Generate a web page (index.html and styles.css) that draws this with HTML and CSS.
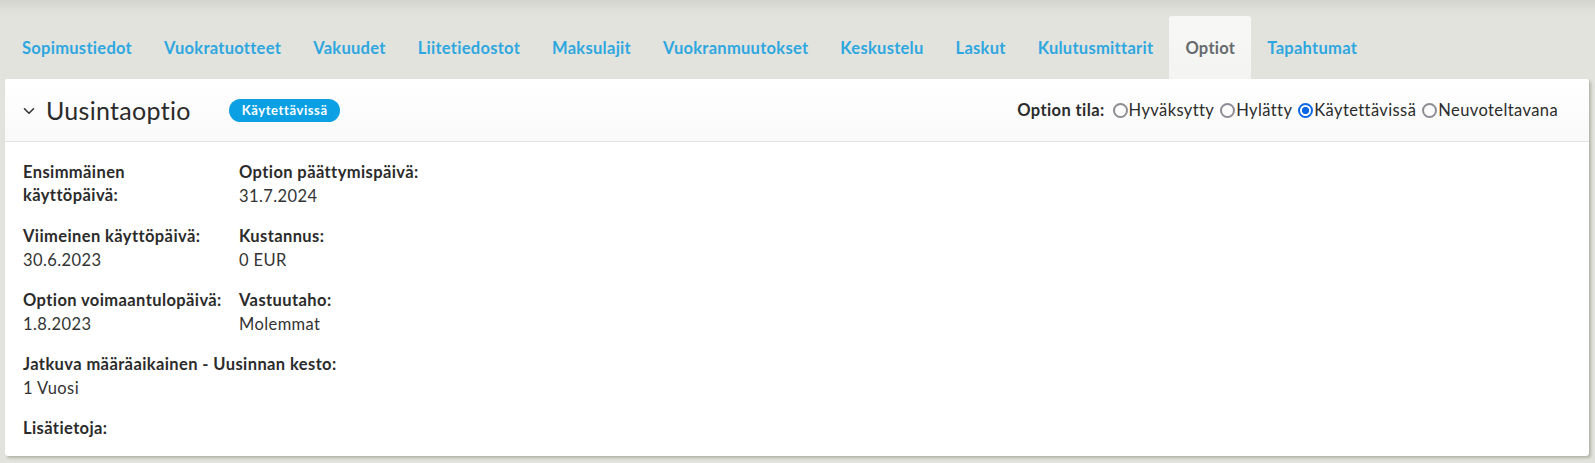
FILE: index.html
```html
<!DOCTYPE html>
<html lang="fi">
<head>
<meta charset="utf-8">
<title>Optiot</title>
<link rel="stylesheet" href="styles.css">
</head>
<body>
<nav class="tabs">
  <a class="tab" href="#">Sopimustiedot</a>
  <a class="tab" href="#">Vuokratuotteet</a>
  <a class="tab" href="#">Vakuudet</a>
  <a class="tab" href="#">Liitetiedostot</a>
  <a class="tab" href="#">Maksulajit</a>
  <a class="tab" href="#">Vuokranmuutokset</a>
  <a class="tab" href="#">Keskustelu</a>
  <a class="tab" href="#">Laskut</a>
  <a class="tab" href="#">Kulutusmittarit</a>
  <a class="tab active" href="#">Optiot</a>
  <a class="tab" href="#">Tapahtumat</a>
</nav>
<section class="card">
  <header class="card-head">
    <div class="title-group">
      <svg class="chevron" width="12" height="8" viewBox="0 0 12 8"><path d="M1.5 1.8 L6 6.2 L10.5 1.8" fill="none" stroke="#333" stroke-width="1.6" stroke-linecap="round" stroke-linejoin="round"/></svg>
      <h2 class="title">Uusintaoptio</h2>
      <span class="badge">Käytettävissä</span>
    </div>
    <div class="status">
      <span class="status-label">Option tila:</span>
      <span class="radio"><span class="circle"></span>Hyväksytty</span>
      <span class="radio"><span class="circle"></span>Hylätty</span>
      <span class="radio"><span class="circle checked"></span>Käytettävissä</span>
      <span class="radio"><span class="circle"></span>Neuvoteltavana</span>
    </div>
  </header>
  <div class="card-body">
    <div class="field">
      <div class="label label-wrap">Ensimmäinen käyttöpäivä:</div>
      <div class="value"></div>
    </div>
    <div class="field">
      <div class="label">Option päättymispäivä:</div>
      <div class="value">31.7.2024</div>
    </div>
    <div class="field">
      <div class="label">Viimeinen käyttöpäivä:</div>
      <div class="value">30.6.2023</div>
    </div>
    <div class="field">
      <div class="label">Kustannus:</div>
      <div class="value">0 EUR</div>
    </div>
    <div class="field">
      <div class="label">Option voimaantulopäivä:</div>
      <div class="value">1.8.2023</div>
    </div>
    <div class="field">
      <div class="label">Vastuutaho:</div>
      <div class="value">Molemmat</div>
    </div>
    <div class="field wide">
      <div class="label">Jatkuva määräaikainen - Uusinnan kesto:</div>
      <div class="value">1 Vuosi</div>
    </div>
    <div class="field wide">
      <div class="label">Lisätietoja:</div>
      <div class="value"></div>
    </div>
  </div>
</section>
</body>
</html>
```
FILE: styles.css
```css
* { box-sizing: border-box; }

html, body {
  margin: 0;
  padding: 0;
}

body {
  width: 1595px;
  height: 463px;
  overflow: hidden;
  font-family: Lato, "Noto Sans", sans-serif;
  font-size: 16.5px;
  letter-spacing: 0.4px;
  color: #2b2b2b;
  background: linear-gradient(to bottom, #d5d5cf 0px, #dfdfda 10px, #e3e3de 18px, #e3e3de 100%);
}

.tabs {
  display: flex;
  padding: 16px 0 0 6px;
  height: 79px;
}

.tab {
  display: flex;
  align-items: center;
  padding: 0 16px;
  height: 63px;
  font-weight: 700;
  letter-spacing: 0.28px;
  color: #2ea7e0;
  text-decoration: none;
  border-radius: 3px 3px 0 0;
}

.tab.active {
  color: #666a6d;
  background: linear-gradient(to bottom, #f7f7f6, #f4f4f3);
}

.card {
  margin: 0 6px 0 5px;
  height: 377px;
  background: #fff;
  border-radius: 3px;
  box-shadow: 2px 2px 3px rgba(120, 120, 105, 0.45);
}

.card-head {
  display: flex;
  align-items: center;
  justify-content: space-between;
  height: 63px;
  padding: 0 31px 0 18px;
  border-bottom: 1px solid #e3e3e3;
  background: linear-gradient(to bottom, #ffffff, #f9f9f9);
  border-radius: 3px 3px 0 0;
}

.title-group {
  display: flex;
  align-items: center;
}

.chevron {
  margin: 2px 11px 0 0;
}

.title {
  margin: 0;
  font-size: 25px;
  font-weight: 400;
  color: #2b2b2b;
  letter-spacing: 0.3px;
}

.badge {
  margin-left: 38px;
  height: 23px;
  padding: 0 12px 0 13px;
  display: inline-flex;
  align-items: center;
  border-radius: 12px;
  background: #0b9fe3;
  color: #fff;
  font-size: 13px;
  letter-spacing: 0.6px;
  font-weight: 700;
}

.status {
  display: flex;
  align-items: center;
  color: #2b2b2b;
}

.status-label {
  font-weight: 700;
  margin-right: 8px;
}

.radio {
  display: inline-flex;
  align-items: center;
  margin-right: 6px;
}

.radio:last-child { margin-right: 0; }

.circle {
  flex: none;
  width: 15px;
  height: 15px;
  border: 2px solid #8d8d95;
  border-radius: 50%;
  margin-right: 1px;
  display: inline-block;
}

.circle.checked {
  border-color: #0b6ae3;
  background: radial-gradient(circle, #0b6ae3 0, #0b6ae3 3.3px, #fff 4px);
}

.card-body {
  display: grid;
  grid-template-columns: 202px 1fr;
  column-gap: 14px;
  row-gap: 16px;
  padding: 19px 18px 20px 18px;
}

.field.wide {
  grid-column: 1 / -1;
}

.label {
  font-weight: 700;
  line-height: 23px;
  color: #2b2b2b;
}

.label-wrap {
  max-width: 180px;
}

.value {
  line-height: 25px;
  color: #333;
}
```
